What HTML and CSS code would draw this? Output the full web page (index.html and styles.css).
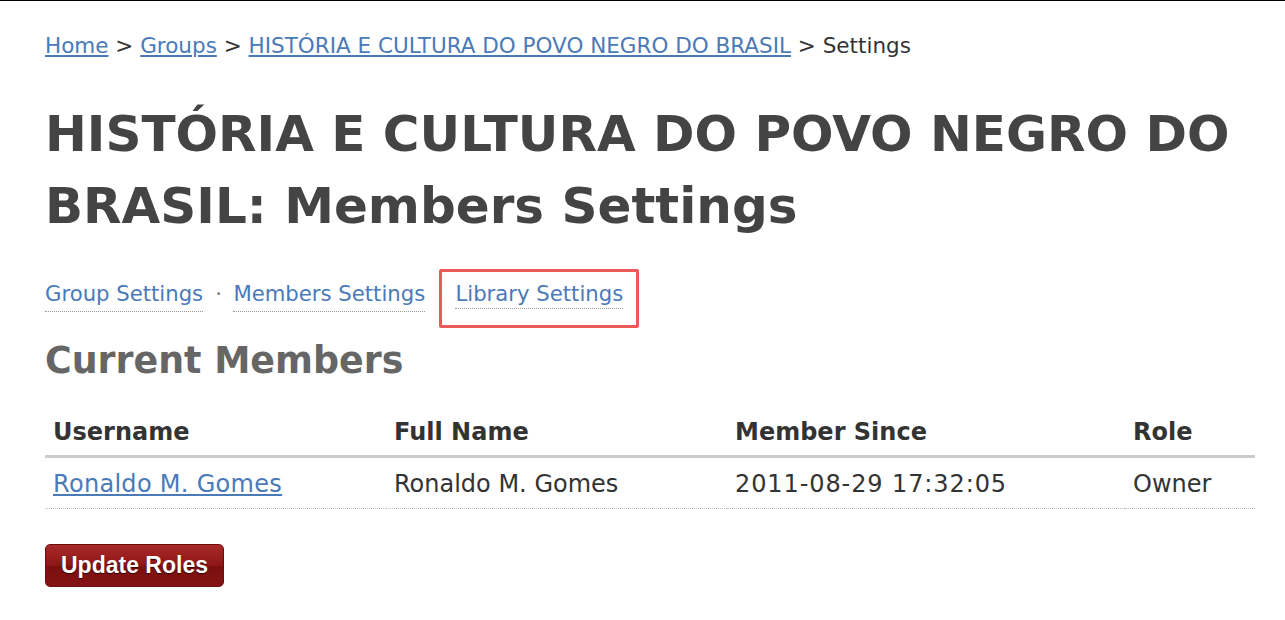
FILE: index.html
```html
<!DOCTYPE html>
<html>
<head>
<meta charset="utf-8">
<link rel="stylesheet" href="styles.css">
</head>
<body>
<div class="page">
  <div class="crumbs"><a href="#">Home</a> &gt; <a href="#">Groups</a> &gt; <a href="#">HISTÓRIA E CULTURA DO POVO NEGRO DO BRASIL</a> &gt; Settings</div>
  <h1 class="title">HISTÓRIA E CULTURA DO POVO NEGRO DO BRASIL: Members Settings</h1>
  <nav class="tabs">
    <a href="#" class="tab">Group Settings</a>
    <span class="sep">·</span>
    <a href="#" class="tab">Members Settings</a>
    <span class="sep">·</span>
    <span class="hl-wrap"><a href="#" class="tab">Library Settings</a><span class="hl"></span></span>
  </nav>
  <h2 class="sub">Current Members</h2>
  <table class="members">
    <thead>
      <tr><th class="c1">Username</th><th class="c2">Full Name</th><th class="c3">Member Since</th><th class="c4">Role</th></tr>
    </thead>
    <tbody>
      <tr><td class="user"><a href="#">Ronaldo M. Gomes</a></td><td>Ronaldo M. Gomes</td><td class="date">2011-08-29 17:32:05</td><td>Owner</td></tr>
    </tbody>
  </table>
  <button class="btn">Update Roles</button>
</div>
</body>
</html>
```
FILE: styles.css
```css
html, body { margin: 0; padding: 0; background: #fff; }
body { border-top: 1px solid #000; font-family: "DejaVu Sans", Verdana, sans-serif; color: #333; }
.page { padding: 0 30px 0 45px; }
a { color: #4a7ab8; }
.crumbs { font-size: 21.5px; line-height: 30px; padding-top: 30px; }
.title { font-size: 50px; line-height: 72px; font-weight: bold; color: #444; margin: 37px 0 0 0; }
.tabs { font-size: 21.2px; line-height: 30px; margin-top: 37px; display: flex; align-items: baseline; }
.tab { text-decoration: none; border-bottom: 1px dotted #999; padding-bottom: 2px; }
.sep { color: #777; margin: 0 11.5px 0 12px; }
.hl-wrap { position: relative; }
.hl { position: absolute; left: -16px; right: -16px; top: -10px; bottom: -19px; border: 3px solid #eb5a5a; border-radius: 2px; }
.sub { font-size: 36.4px; line-height: 50px; color: #666; margin: 24px 0 0 0; }
.members { border-collapse: collapse; width: 1210px; margin-top: 28px; font-size: 24px; }
.members th { text-align: left; padding: 4px 8px 9px; font-weight: bold; color: #333; border-bottom: 3px solid #ccc; }
.members td { padding: 12px 8px 10px; border-bottom: 1px dotted #bbb; }
.members .user { letter-spacing: 0.3px; }
.members .date { letter-spacing: 0.9px; }
.c1 { width: 325px; } .c2 { width: 325px; } .c3 { width: 382px; }
.btn { display: block; margin-top: 35px; font-family: "Liberation Sans", Arial, sans-serif; font-weight: bold; font-size: 23px; line-height: 26px; color: #fff; text-shadow: 0 1px 1px #300; border: 1px solid #6a0d0d; border-radius: 5px; padding: 7px 15px 8px; background: linear-gradient(#a82a2a, #8e1616 50%, #7a0f0f 51%, #861414); }
```
